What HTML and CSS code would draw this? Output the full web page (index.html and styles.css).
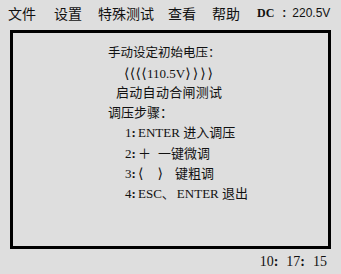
FILE: index.html
```html
<!DOCTYPE html>
<html lang="zh">
<head>
<meta charset="utf-8">
<link rel="stylesheet" href="styles.css">
</head>
<body>
<div class="menu">
  <span class="m m1">文件</span>
  <span class="m m2">设置</span>
  <span class="m m3">特殊测试</span>
  <span class="m m4">查看</span>
  <span class="m m5">帮助</span>
  <span class="dc"><b class="dcl">DC</b><span class="dcc">:</span>220.5V</span>
</div>
<div class="box">
  <div class="line l1">手动设定初始电压：</div>
  <div class="line l2"><span class="br brl">⟨⟨⟨⟨</span>110.5V<span class="br brr">⟩⟩⟩⟩</span></div>
  <div class="line l3">启动自动合闸测试</div>
  <div class="line l4">调压步骤：</div>
  <div class="line l5"><span class="n">1<b>:</b></span>ENTER 进入调压</div>
  <div class="line l5"><span class="n">2<b>:</b></span><span class="plus">＋</span>一键微调</div>
  <div class="line l5"><span class="n">3<b>:</b></span><span class="br gap">⟨</span><span class="br gap2">⟩</span>键粗调</div>
  <div class="line l5"><span class="n">4<b>:</b></span>ESC<span class="dun">、</span>ENTER 退出</div>
</div>
<div class="time">10<b>:</b><span class="tg"></span>17<b>:</b><span class="tg"></span>15</div>
</body>
</html>
```
FILE: styles.css
```css
html, body {
  margin: 0;
  padding: 0;
  background: #dedede;
}
body {
  width: 341px;
  height: 274px;
  font-family: "Liberation Serif", "Noto Sans CJK SC", serif;
  font-size: 13px;
  color: #111;
}
.menu {
  display: flex;
  align-items: center;
  height: 26px;
  margin-bottom: 4px;
  padding-left: 8px;
  font-family: "Noto Sans CJK SC", sans-serif;
  font-size: 14px;
}
.m { white-space: nowrap; }
.m1 { width: 46px; }
.m2 { width: 44px; }
.m3 { width: 70px; }
.m4 { width: 44px; }
.m5 { width: 45px; }
.dc {
  display: flex;
  align-items: center;
  font-family: "Liberation Sans", sans-serif;
  font-size: 12px;
  white-space: nowrap;
}
.dcl {
  font-family: "Liberation Serif", serif;
  font-size: 12px;
  font-weight: bold;
}
.dcc {
  font-weight: bold;
  margin: 0 6px 0 8px;
}
.box {
  margin-left: 10px;
  width: 315px;
  height: 203px;
  border: 3px solid #000;
  padding-top: 10px;
}
.line {
  height: 20px;
  line-height: 20px;
  white-space: nowrap;
  font-family: "Liberation Serif", "Noto Sans CJK SC", serif;
}
.l1 { padding-left: 95px; font-size: 12.5px; }
.l2 { padding-left: 111px; }
.l3 { padding-left: 103px; letter-spacing: 0.3px; }
.l4 { padding-left: 95px; }
.l5 { padding-left: 112px; }
.n {
  display: inline-block;
  width: 13px;
}
.br {
  font-family: "DejaVu Sans", sans-serif;
  font-size: 14px;
  line-height: 20px;
}
.brl { letter-spacing: 0.3px; }
.brr { letter-spacing: 2px; }
.gap { margin-right: 14px; }
.gap2 { margin-right: 12px; }
.plus {
  font-family: "Noto Sans CJK SC", sans-serif;
  margin-right: 7px;
}
.dun {
  font-family: "Noto Sans CJK SC", sans-serif;
  margin-right: 2px;
}
.time {
  display: flex;
  justify-content: flex-end;
  padding-right: 14px;
  padding-top: 3px;
  line-height: 20px;
  font-size: 14px;
}
.tg { display: inline-block; width: 8px; }
```
